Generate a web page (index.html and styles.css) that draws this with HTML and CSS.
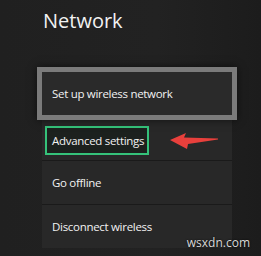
FILE: index.html
```html
<!DOCTYPE html>
<html>
<head>
  <title>Network</title>
  <link rel="stylesheet" href="styles.css">
</head>
<body>

  <div class="screen">
    <h1>Network</h1>

    <!-- Menu list -->
    <div class="menu">
      <div class="item focused">Set up wireless network</div>
      <div class="item advanced">
        <span class="marked">Advanced settings</span>
        <svg class="arrow" width="50" height="20" viewBox="0 0 50 20">
          <polygon points="0,8 16,1 14,5.5 48,6.5 48,7.5 18,12 17,17" fill="#e8403c"/>
        </svg>
      </div>
      <div class="item">Go offline</div>
      <div class="item">Disconnect wireless</div>
    </div>

    <div class="mark">wsxdn.com</div>
  </div>

</body>
</html>
```

FILE: styles.css
```css
body {
  margin: 0;
  background-color: #1d1d1d;
  font-family: "Open Sans", "Noto Sans", sans-serif;
  color: #f2f2f2;
  overflow: hidden;
}

.screen {
  position: relative;
  width: 261px;
  height: 256px;
  padding-left: 42px;
  box-sizing: border-box;
  background: linear-gradient(90deg, #202020 0%, #222 60%, #1c1c1c 100%);
}

h1 {
  margin: 0;
  padding-top: 8px;
  font-size: 20px;
  font-weight: 400;
  line-height: 26px;
  height: 59px;
  padding-left: 1px;
}

/* Menu */
.menu {
  width: 190px;
  display: flex;
  flex-direction: column;
  gap: 1px;
  background: #1a1a1a;
}

.item {
  display: flex;
  align-items: center;
  height: 43px;
  padding-left: 10px;
  background: #282828;
  font-size: 11.5px;
  letter-spacing: -0.3px;
  white-space: nowrap;
}

.focused {
  height: 43px;
  margin: 0 -5px -1px;
  padding-left: 10px;
  border: 5px solid #7b7b7b;
  background: #2a2a2a;
  box-shadow: 0 0 8px rgba(0, 0, 0, 0.6);
  position: relative;
  z-index: 1;
}

.advanced {
  position: relative;
  height: 40px;
  padding-left: 3px;
}

.marked {
  display: flex;
  align-items: center;
  height: 25px;
  padding: 0 3px 0 5px;
  border: 2px solid #35c27a;
  background: #1c211e;
}

.arrow {
  position: absolute;
  left: 128px;
  top: 12px;
}

.mark {
  position: absolute;
  right: 11px;
  bottom: 5px;
  font-size: 12px;
  color: #d8d8d8;
  text-shadow: 0 0 2px #000;
}
```
